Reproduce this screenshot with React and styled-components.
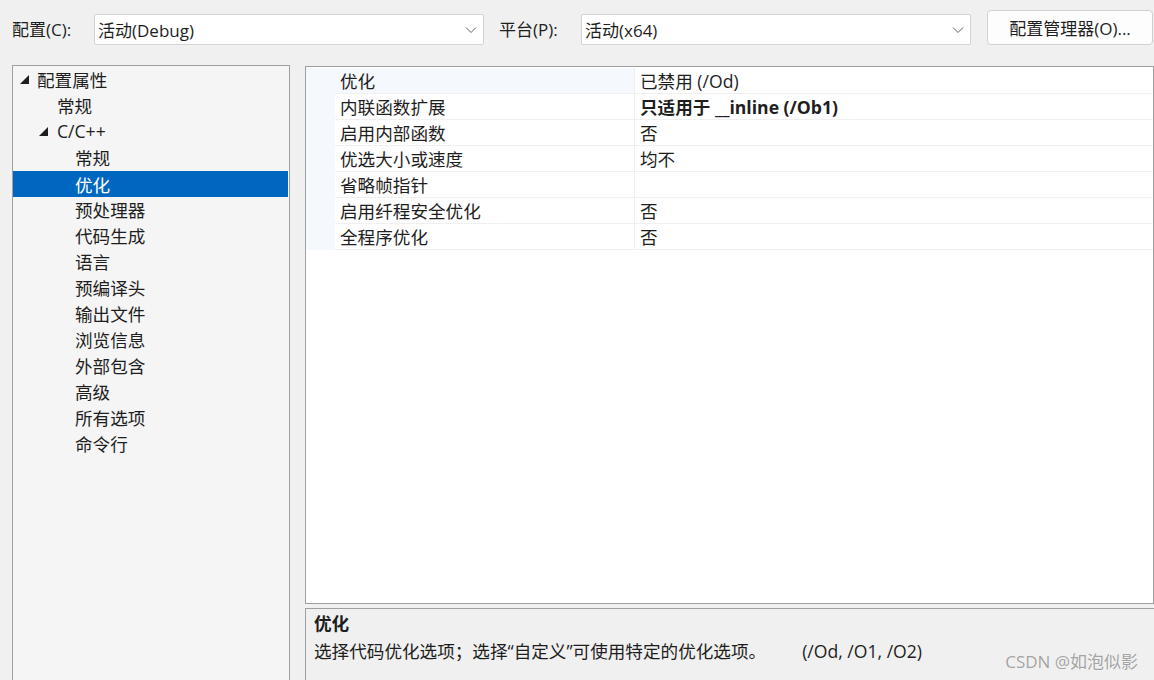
import React from 'react';
import styled, { createGlobalStyle } from 'styled-components';

const GlobalStyle = createGlobalStyle`
  html, body {
    margin: 0;
    padding: 0;
    background: #f0f0f0;
  }
  body {
    font-family: "Open Sans", "Noto Sans CJK SC", "Liberation Sans", sans-serif;
    color: #1e1e1e;
  }
`;

const Page = styled.div`
  width: 1154px;
  height: 680px;
  overflow: hidden;
  display: flex;
  flex-direction: column;
  position: relative;
`;

const TopBar = styled.div`
  display: flex;
  align-items: center;
  height: 58px;
  padding-left: 12px;
  flex-shrink: 0;
`;

const Label = styled.span`
  width: ${(p) => p.w}px;
  font-size: 17px;
  line-height: 20px;
  margin-top: 2px;
`;

const Dropdown = styled.div`
  width: 390px;
  height: 31px;
  box-sizing: border-box;
  background: #fff;
  border: 1px solid #d3d3d3;
  border-radius: 2px;
  display: flex;
  align-items: center;
  justify-content: space-between;
  padding: 0 6px 0 3px;
  font-size: 17px;
  margin-right: ${(p) => p.mr || 0}px;
  margin-top: 1px;
`;

const Button = styled.div`
  width: 166px;
  height: 35px;
  box-sizing: border-box;
  background: #fdfdfd;
  border: 1px solid #d0d0d0;
  border-radius: 4px;
  display: flex;
  align-items: center;
  justify-content: center;
  font-size: 17px;
  margin-top: -3px;
`;

const Chevron = () => (
  <svg width="12" height="8" viewBox="0 0 12 8">
    <polyline points="1,1.5 6,6.5 11,1.5" fill="none" stroke="#606060" strokeWidth="1" />
  </svg>
);

const Main = styled.div`
  flex: 1;
  display: flex;
  padding-left: 12px;
  gap: 15px;
  min-height: 0;
`;

const TreePanel = styled.div`
  width: 278px;
  box-sizing: border-box;
  margin-top: 7px;
  height: 640px;
  background: #f5f5f5;
  border: 1px solid #a0a0a0;
  padding: 0 1px 0 0;
`;

const TreeRow = styled.div`
  height: 26px;
  display: flex;
  align-items: center;
  padding-left: ${(p) => p.indent}px;
  font-size: 17.6px;
  background: ${(p) => (p.selected ? '#0067c0' : 'transparent')};
  color: ${(p) => (p.selected ? '#fff' : '#1e1e1e')};
  margin-top: ${(p) => (p.selected ? 1 : 0)}px;
  margin-bottom: ${(p) => (p.selected ? -1 : 0)}px;
`;

const Arrow = styled.span`
  width: ${(p) => p.w}px;
  display: flex;
  align-items: center;
`;

const Expander = () => (
  <svg width="9" height="9" viewBox="0 0 9 9">
    <polygon points="9,0 9,9 0,9" fill="#1e1e1e" />
  </svg>
);

const RightCol = styled.div`
  flex: 1;
  display: flex;
  flex-direction: column;
  margin-top: 8px;
  gap: 4px;
`;

const Grid = styled.div`
  height: 538px;
  box-sizing: border-box;
  background: #fff;
  border: 1px solid #a0a0a0;
  padding-top: 1px;
`;

const GridRow = styled.div`
  display: grid;
  grid-template-columns: 29px 299px 1fr;
  height: 26px;
  font-size: 17.6px;
`;

const Gutter = styled.div`
  background: #f5f8fc;
`;

const Cell = styled.div`
  display: flex;
  align-items: center;
  padding-left: 5px;
  border-bottom: 1px solid #f0f0f0;
  border-left: ${(p) => (p.value ? '1px solid #f0f0f0' : 'none')};
  background: ${(p) => (p.active ? '#f5f8fc' : '#fff')};
  font-weight: ${(p) => (p.bold ? 700 : 400)};
  white-space: pre;
`;

const Desc = styled.div`
  flex: 1;
  border-top: 1px solid #a0a0a0;
  border-left: 1px solid #a0a0a0;
  background: #f0f0f0;
  padding: 2px 8px;
`;

const DescTitle = styled.div`
  font-size: 17.6px;
  font-weight: 700;
  line-height: 24px;
`;

const DescText = styled.div`
  font-size: 17.6px;
  line-height: 28px;
  margin-top: 2px;
  white-space: pre;
`;

const Switches = styled.span`
  margin-left: 36px;
`;

const Watermark = styled.div`
  position: absolute;
  right: 16px;
  bottom: 7px;
  font-size: 17px;
  color: #a3a3a3;
  text-shadow: 0 0 1px #fff;
`;

const tree = [
  { label: '配置属性', indent: 7, arrow: 17 },
  { label: '常规', indent: 44 },
  { label: 'C/C++', indent: 26, arrow: 18 },
  { label: '常规', indent: 62 },
  { label: '优化', indent: 62, selected: true },
  { label: '预处理器', indent: 62 },
  { label: '代码生成', indent: 62 },
  { label: '语言', indent: 62 },
  { label: '预编译头', indent: 62 },
  { label: '输出文件', indent: 62 },
  { label: '浏览信息', indent: 62 },
  { label: '外部包含', indent: 62 },
  { label: '高级', indent: 62 },
  { label: '所有选项', indent: 62 },
  { label: '命令行', indent: 62 },
];

const props = [
  { name: '优化', value: '已禁用 (/Od)', active: true },
  { name: '内联函数扩展', value: '只适用于 __inline (/Ob1)', bold: true },
  { name: '启用内部函数', value: '否' },
  { name: '优选大小或速度', value: '均不' },
  { name: '省略帧指针', value: '' },
  { name: '启用纤程安全优化', value: '否' },
  { name: '全程序优化', value: '否' },
];

export default function App() {
  return (
    <Page>
      <GlobalStyle />
      <TopBar>
        <Label w={82}>配置(C):</Label>
        <Dropdown mr={15}>
          <span>活动(Debug)</span>
          <Chevron />
        </Dropdown>
        <Label w={82}>平台(P):</Label>
        <Dropdown mr={16}>
          <span>活动(x64)</span>
          <Chevron />
        </Dropdown>
        <Button>配置管理器(O)...</Button>
      </TopBar>
      <Main>
        <TreePanel>
          {tree.map((t, i) => (
            <TreeRow key={i} indent={t.indent} selected={t.selected}>
              {t.arrow && (
                <Arrow w={t.arrow}>
                  <Expander />
                </Arrow>
              )}
              {t.label}
            </TreeRow>
          ))}
        </TreePanel>
        <RightCol>
          <Grid>
            {props.map((p, i) => (
              <GridRow key={i}>
                <Gutter />
                <Cell active={p.active}>{p.name}</Cell>
                <Cell value bold={p.bold}>{p.value}</Cell>
              </GridRow>
            ))}
          </Grid>
          <Desc>
            <DescTitle>优化</DescTitle>
            <DescText>
              选择代码优化选项；选择“自定义”可使用特定的优化选项。
              <Switches>(/Od, /O1, /O2)</Switches>
            </DescText>
          </Desc>
        </RightCol>
      </Main>
      <Watermark>CSDN @如泡似影</Watermark>
    </Page>
  );
}
